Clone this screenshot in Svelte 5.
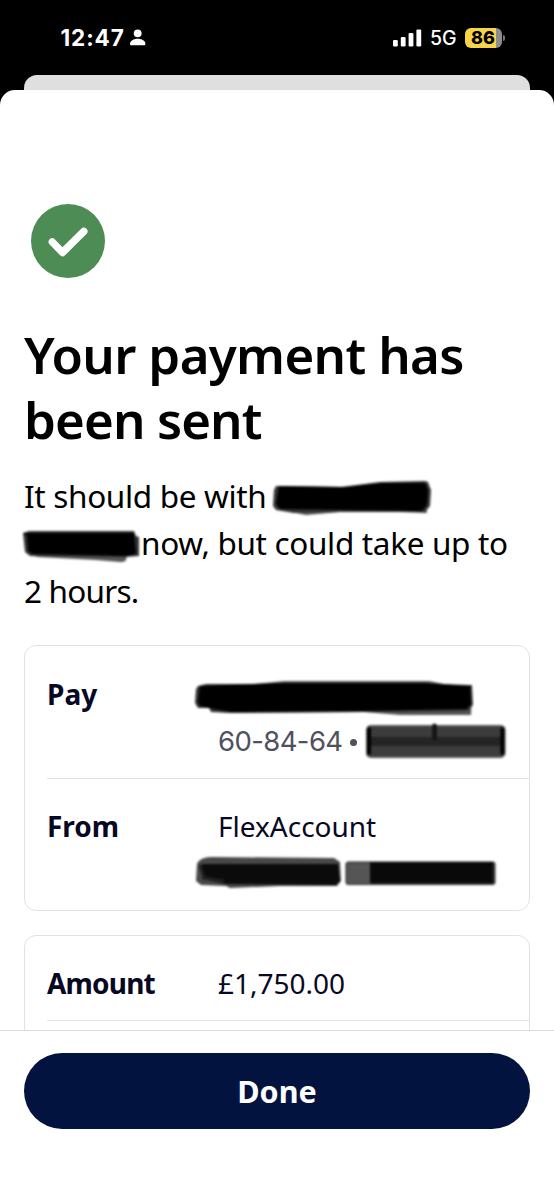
<script lang="ts">
	const bars = [
		{ x: 0, height: 6.5 },
		{ x: 7.8, height: 9.5 },
		{ x: 15.6, height: 13.5 },
		{ x: 23.4, height: 17 }
	];

	let battery = 86;
</script>

<div class="screen">
	<header class="status">
		<div class="clock">
			<span class="time">12:47</span>
			<svg width="16" height="17" viewBox="0 0 16 17" fill="#fff">
				<circle cx="7.7" cy="4.3" r="3.9" />
				<path d="M0 15c0-3 3.4-5.200 7.700-5.200s7.700 2.200 7.700 5.200c0 .9-.5 1.300-1.300 1.300H1.300C.5 16.300 0 15.900 0 15z" />
			</svg>
		</div>
		<div class="indicators">
			<svg width="29" height="18" viewBox="0 0 29 18" fill="#fff">
				{#each bars as bar}
					<rect x={bar.x} y={17.4 - bar.height} width="4.8" height={bar.height} rx="1.2" />
				{/each}
			</svg>
			<span class="network">5G</span>
			<div class="battery"><span>{battery}</span></div>
			<i class="nub"></i>
		</div>
	</header>

	<div class="back-sheet"></div>

	<main class="sheet">
		<svg class="tick" width="74" height="74" viewBox="0 0 74 74" fill="none">
			<circle cx="37" cy="37" r="37" fill="#4d8c55" />
			<path d="M21.3 38l10.2 10.5L52.800 27.400" stroke="#fff" stroke-width="7.4" stroke-linecap="round" stroke-linejoin="round" />
		</svg>

		<h1>Your payment has<br /><span class="second">been sent</span></h1>

		<div class="message">
			<div class="line">
				<span>It should be with</span>
				<svg class="mark name-top" width="160" height="36" viewBox="272 479 160 36">
					<path d="M294 508L426 505L427 513L400 512L340 512L306 515L291 512z" fill="#555" />
					<path d="M276 486L341 487L380 482L424 481Q429 481 429 485L431 490L430 506L425 512L338 512L294 513L276 510L273 506L274 490z" fill="#333" />
					<path d="M279 486L346 487L382 483L425 483L428 490L427 505L422 511L280 509L276 504z" fill="#000" />
				</svg>
			</div>
			<div class="line">
				<svg class="mark name-end" width="118" height="34" viewBox="23 529 118 34">
					<path d="M34 556L128 551L126 560Q125 562 120 562L96 560L38 557z" fill="#555" />
					<path d="M23 533L29 531L134 531L136 536L139 537L139 556L126 557L30 556L25 552z" fill="#333" />
					<path d="M24 533L134 533L136 554L126 556L33 554L28 551L27 535L24 535z" fill="#000" />
				</svg>
				<span>now, but could take up to</span>
			</div>
			<div class="line hours"><span>2 hours.</span></div>
		</div>

		<section class="card">
			<div class="row pay">
				<div class="label">Pay</div>
				<div class="value">
					<div class="entry">
						<svg class="mark payee" width="280" height="38" viewBox="195 680 280 38">
							<path d="M245 685L284 681L429 681L444 684L468 685L472 690L471 715L400 715L364 712L230 713L211 711z" fill="#555" />
							<path d="M198 686L206 684L245 684L472 685L473 705L468 711L364 712L232 713L211 712L209 708L198 708L195 703L196 689z" fill="#333" />
							<path d="M200 686L280 683L425 683L470 686L471 704L467 709L363 711L232 712L214 709L200 706L198 702z" fill="#000" />
						</svg>
					</div>
					<div class="entry muted">
						<span class="sort">60-84-64</span><i class="dot"></i>
						<svg class="mark account" width="142" height="36" viewBox="365 723 142 36">
							<rect x="366" y="725" width="139.5" height="33" rx="5" fill="#555" />
							<rect x="367" y="727" width="137.5" height="29" rx="4" fill="#3c3c3c" />
							<path d="M369 737h134v9H369z" fill="#242424" />
							<path d="M369 729v24M502.500 729v24" stroke="#000" stroke-width="4" stroke-linecap="round" />
							<path d="M434.5 726v12" stroke="#161616" stroke-width="5" stroke-linecap="round" />
						</svg>
					</div>
				</div>
			</div>
			<div class="row from">
				<div class="label">From</div>
				<div class="value">
					<div class="entry">FlexAccount</div>
					<div class="entry">
						<svg class="mark source" width="302" height="34" viewBox="195 854 302 34">
							<path d="M198 861Q202 856 212 856L334 857L340 861L341 880L337 885L280 885L230 887L226 885L201 884L196 880L197 863z" fill="#484848" />
							<path d="M202 863L338 863L340 880L336 884L226 883L202 878z" fill="#0b0b0b" />
							<path d="M200 864L204 877L224 880" stroke="#222" stroke-width="3" fill="none" />
							<rect x="345.5" y="860.5" width="150" height="23.5" rx="3" fill="#333" />
							<rect x="347" y="862" width="24" height="21" fill="#555" />
							<path d="M370 861h123v21H370z" fill="#090909" />
						</svg>
					</div>
				</div>
			</div>
		</section>

		<section class="card cut">
			<div class="row amount">
				<div class="label">Amount</div>
				<div class="value"><div class="entry">£1,750.00</div></div>
			</div>
		</section>
	</main>

	<footer>
		<button>Done</button>
	</footer>
</div>

<style>
	:global(body) {
		margin: 0;
		background: #000;
	}

	.screen {
		display: flex;
		flex-direction: column;
		width: 554px;
		height: 1199px;
		overflow: hidden;
		background: #000;
		color: #000;
		font-family: 'Noto Sans', 'Open Sans', sans-serif;
	}

	.screen * {
		box-sizing: border-box;
	}

	.status {
		display: flex;
		justify-content: space-between;
		flex: none;
		height: 75px;
		padding: 0 49px 0 60.5px;
		color: #fff;
		font-family: Inter, sans-serif;
	}

	.clock,
	.indicators {
		display: flex;
		align-items: center;
		height: 75px;
	}

	.time {
		width: 69.5px;
		font-size: 22.5px;
		font-weight: 700;
		letter-spacing: 0.9px;
	}

	.network {
		width: 34px;
		margin-left: 8px;
		padding-top: 1px;
		font-size: 19.5px;
		font-weight: 500;
	}

	.battery {
		display: flex;
		align-items: center;
		justify-content: center;
		width: 37px;
		height: 20px;
		margin-left: 1px;
		padding-right: 1px;
		border-radius: 6px;
		background: linear-gradient(to right, #f8d548 31px, #8d8d8d 31px);
		color: #000;
		font-size: 18px;
		font-weight: 800;
	}

	.nub {
		width: 2px;
		height: 6px;
		margin-left: 1px;
		border-radius: 0 2px 2px 0;
		background: #777;
	}

	.back-sheet {
		flex: none;
		height: 28px;
		margin: 0 24px -13px;
		border-radius: 13px 13px 0 0;
		background: #dfdfdf;
	}

	.sheet {
		position: relative;
		flex: none;
		height: 940px;
		padding: 114px 24px 0;
		overflow: hidden;
		border-radius: 15px 15px 0 0;
		background: #fff;
	}

	.tick {
		display: block;
		margin-left: 7px;
	}

	h1 {
		height: 130px;
		margin: 44px 0 20px;
		font-size: 51px;
		font-weight: 600;
		line-height: 65px;
		letter-spacing: -0.65px;
		white-space: nowrap;
	}

	.second {
		letter-spacing: -0.9px;
	}

	.message {
		font-size: 31.5px;
		line-height: 47.3px;
		letter-spacing: -0.33px;
	}

	.line {
		display: flex;
		height: 47.3px;
		white-space: nowrap;
	}

	.hours {
		letter-spacing: -0.8px;
	}

	.mark {
		display: block;
		flex: none;
		filter: blur(0.8px);
	}

	.name-top {
		position: relative;
		right: 98px;
		margin: 7px 0 0 auto;
	}

	.name-end {
		margin: 10px 0 0 -1px;
	}

	.card {
		height: 266px;
		margin-top: 31px;
		padding-left: 22px;
		border: 1.5px solid #e2e2e4;
		border-radius: 12px;
		color: #070823;
		font-size: 28px;
		line-height: 47px;
		white-space: nowrap;
	}

	.card.cut {
		margin-top: 24px;
	}

	.row {
		display: flex;
		padding-top: 25px;
	}

	.pay {
		height: 133px;
		border-bottom: 1.5px solid #e2e2e4;
	}

	.from,
	.amount {
		padding-top: 24px;
	}

	.amount {
		height: 85px;
		border-bottom: 1.5px solid #e2e2e4;
	}

	.amount .label {
		letter-spacing: -0.8px;
	}

	.label {
		width: 171px;
		font-weight: 700;
	}

	.entry {
		display: flex;
		height: 47px;
	}

	.muted {
		align-items: flex-start;
		width: 289px;
		color: #50505f;
	}

	.sort {
		width: 123px;
		font-family: Inter, sans-serif;
		font-size: 27.5px;
		font-weight: 400;
		letter-spacing: -0.6px;
	}

	.dot {
		width: 7px;
		height: 7px;
		margin: 21px 0 0 9px;
		border-radius: 50%;
		background: #50505f;
	}

	.payee {
		margin: 9px 0 0 -23px;
	}

	.account {
		margin: 5px 0 0 auto;
	}

	.source {
		margin: 5px 0 0 -23px;
	}

	footer {
		flex: 1;
		padding: 22px 24px 0;
		border-top: 1px solid #dcdce0;
		background: #fff;
	}

	button {
		display: block;
		width: 506px;
		height: 76px;
		padding: 0;
		border: 0;
		border-radius: 38px;
		background: #03133f;
		color: #fff;
		font: 700 30.5px/77px 'Noto Sans', sans-serif;
	}
</style>
